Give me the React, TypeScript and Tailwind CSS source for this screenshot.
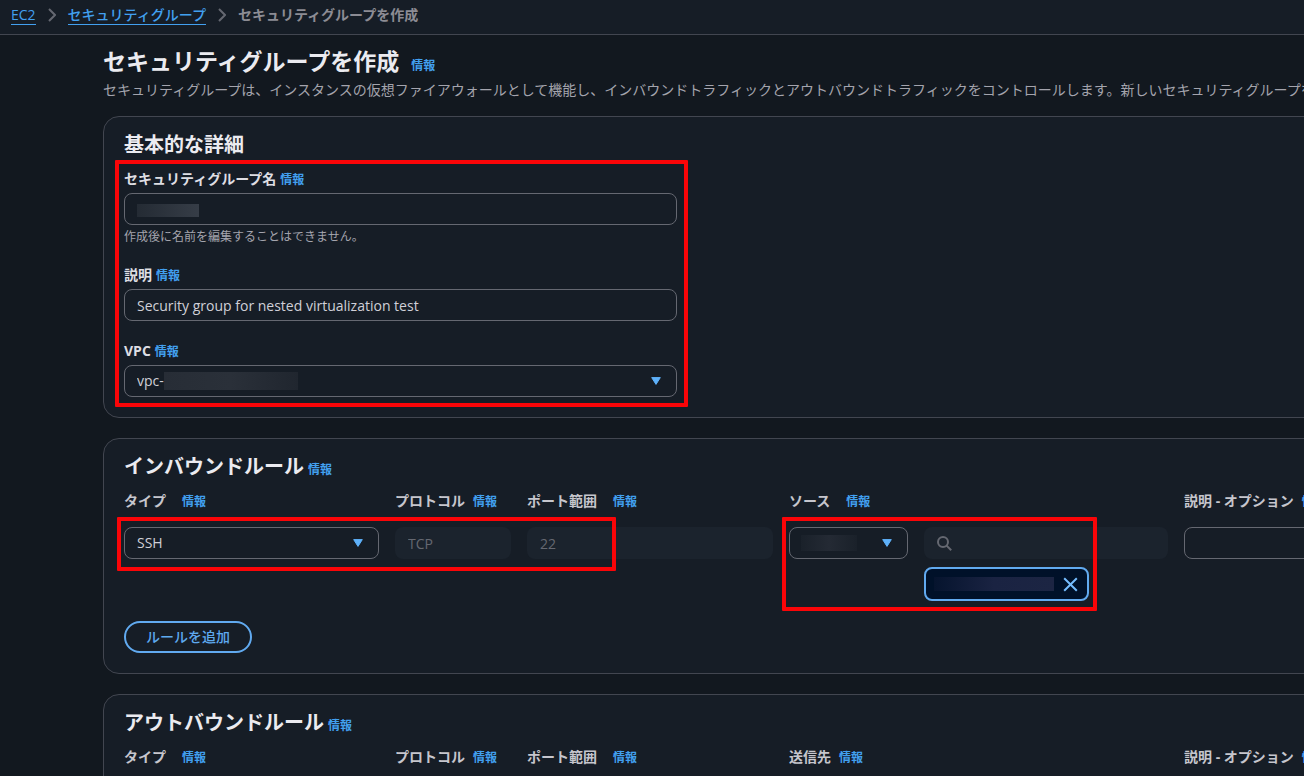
import type { ReactNode } from "react";

function InfoLink() {
  return (
    <a href="#info" className="text-xs leading-5 font-bold text-[#42a0f0]">
      情報
    </a>
  );
}

function Chevron() {
  return (
    <svg width="8" height="14" viewBox="0 0 8 14" fill="none" stroke="#656871" strokeWidth="2" aria-hidden="true">
      <path d="M1 1l6 6-6 6" />
    </svg>
  );
}

function Arrow() {
  return (
    <svg
      className="pointer-events-none absolute right-4 top-3 h-2 w-[10px]"
      viewBox="0 0 10 8"
      fill="#5eb1fa"
      stroke="#5eb1fa"
      strokeLinejoin="round"
      aria-hidden="true"
    >
      <path d="M0.7 0.6h8.6L5 7.4z" />
    </svg>
  );
}

function Redaction({ className }: { className: string }) {
  return <span aria-hidden="true" className={`pointer-events-none absolute ${className}`} />;
}

function Highlight({ className }: { className: string }) {
  return (
    <span
      aria-hidden="true"
      className={`pointer-events-none absolute z-10 rounded-[1px] border-4 border-[#fa0508] ${className}`}
    />
  );
}

const control =
  "block h-8 w-full appearance-none rounded-lg border border-[#656871] bg-[#161d26] px-3 text-sm font-medium text-[#d0d0d8] outline-none";
const disabledControl =
  "block h-8 w-full rounded-lg bg-[#1b232d] px-[13px] text-sm text-[#656871] outline-none";

function Select({ id, label, value, children }: { id: string; label?: string; value: string; children?: ReactNode }) {
  return (
    <div className="relative">
      <select id={id} aria-label={label} className={control} defaultValue={value}>
        <option value={value}>{value}</option>
      </select>
      {children}
      <Arrow />
    </div>
  );
}

function FieldLabel({ htmlFor, children }: { htmlFor: string; children: ReactNode }) {
  return (
    <div className="flex h-5 items-baseline gap-1 text-sm leading-5">
      <label htmlFor={htmlFor} className="font-bold text-[#dedee3]">
        {children}
      </label>
      <InfoLink />
    </div>
  );
}

function Card({ title, info, children }: { title: string; info?: boolean; children: ReactNode }) {
  return (
    <section className="rounded-2xl border border-[#424650] bg-[#161d26] px-5 pt-4 pb-5">
      <div className="flex h-6 items-baseline gap-1">
        <h2 className="text-xl leading-6 font-bold text-[#ebebf0]">{title}</h2>
        {info && <InfoLink />}
      </div>
      {children}
    </section>
  );
}

const columns = "grid grid-cols-[255px_116px_246px_379px_1fr] gap-x-4";

function RuleHeader({ prefix, target }: { prefix: string; target: { text: string; wide: boolean } }) {
  const items = [
    { id: "type", text: "タイプ", wide: true },
    { id: "protocol", text: "プロトコル", wide: false },
    { id: "port", text: "ポート範囲", wide: true },
    { id: "target", ...target },
    { id: "description", text: "説明 - オプション", wide: false },
  ];
  return (
    <div className={`${columns} mt-3`}>
      {items.map((item) => (
        <div
          key={item.id}
          className={`flex h-5 items-baseline text-sm leading-5 whitespace-nowrap ${item.wide ? "gap-4" : "gap-2"}`}
        >
          <label htmlFor={`${prefix}-${item.id}`} className="font-bold text-[#c6c6cd]">
            {item.text}
          </label>
          <InfoLink />
        </div>
      ))}
    </div>
  );
}

export default function App() {
  return (
    <div className="min-h-screen overflow-x-hidden bg-[#12181f] font-['Open_Sans','Noto_Sans_CJK_JP',sans-serif]">
      <nav
        aria-label="パンくずリスト"
        className="flex items-center gap-3 border-b border-[#424650] bg-[#161d26] pt-[5px] pb-[9px] pl-[11px] text-sm leading-[19px]"
      >
        <a href="#ec2" className="border-b border-[#42a0f0] font-medium text-[#42a0f0]">
          EC2
        </a>
        <Chevron />
        <a href="#groups" className="border-b border-[#42a0f0] font-medium text-[#42a0f0]">
          セキュリティグループ
        </a>
        <Chevron />
        <span className="border-b border-transparent font-bold text-[#8c8c94]">セキュリティグループを作成</span>
      </nav>

      <main className="ml-[103px] min-w-[1440px] pt-3">
        <div className="flex h-7 items-baseline gap-3">
          <h1 className="text-[23px] leading-7 font-bold text-[#ebebf0]">セキュリティグループを作成</h1>
          <InfoLink />
        </div>
        <p className="mt-1 text-sm leading-[21px] whitespace-nowrap text-[#a4a4ad]">
          セキュリティグループは、インスタンスの仮想ファイアウォールとして機能し、インバウンドトラフィックとアウトバウンドトラフィックをコントロールします。新しいセキュリティグループを作成するには、以下のフィールドに入力します。
        </p>

        <div className="mt-4 flex flex-col gap-5">
          <Card title="基本的な詳細">
            <div className="relative mt-3 flex w-[553px] flex-col gap-5">
              <Highlight className="-top-[9px] -right-[11px] -bottom-[10px] -left-[9px]" />
              <div>
                <FieldLabel htmlFor="group-name">セキュリティグループ名</FieldLabel>
                <div className="relative mt-1">
                  <input id="group-name" type="text" className={control} />
                  <Redaction className="top-[11px] left-[13px] h-[13px] w-[62px] bg-linear-to-r from-[#242b34] to-[#363d47]" />
                </div>
                <p className="mt-1 text-xs leading-4 text-[#a4a4ad]">作成後に名前を編集することはできません。</p>
              </div>
              <div>
                <FieldLabel htmlFor="description">説明</FieldLabel>
                <div className="mt-1">
                  <input
                    id="description"
                    type="text"
                    className={control}
                    defaultValue="Security group for nested virtualization test"
                  />
                </div>
              </div>
              <div>
                <FieldLabel htmlFor="vpc">VPC</FieldLabel>
                <div className="mt-1">
                  <Select id="vpc" value="vpc-">
                    <Redaction className="top-[7px] left-10 h-[18px] w-[134px] bg-linear-to-r from-[#272d36] via-[#2a3039] to-[#20262f]" />
                  </Select>
                </div>
              </div>
            </div>
          </Card>

          <Card title="インバウンドルール" info>
            <RuleHeader prefix="inbound" target={{ text: "ソース", wide: true }} />
            <div className={`${columns} relative mt-4`}>
              <Highlight className="-top-[10px] -left-[7px] h-[54px] w-[499px]" />
              <Highlight className="-top-[10px] left-[658px] h-[94px] w-[315px]" />
              <Select id="inbound-type" value="SSH" />
              <input id="inbound-protocol" type="text" disabled className={disabledControl} defaultValue="TCP" />
              <input id="inbound-port" type="text" disabled className={disabledControl} defaultValue="22" />
              <div className="grid grid-cols-[119px_1fr] gap-4">
                <Select id="inbound-target" value="">
                  <Redaction className="top-2 left-3 h-4 w-14 bg-linear-to-r from-[#1a212a] via-[#242a34] to-[#1a212a]" />
                </Select>
                <div>
                  <div className="relative">
                    <input type="search" aria-label="ソースを検索" disabled className={disabledControl} />
                    <svg
                      className="pointer-events-none absolute top-[9px] left-[13px]"
                      width="15"
                      height="15"
                      viewBox="0 0 15 15"
                      fill="none"
                      stroke="#656871"
                      strokeWidth="2"
                      aria-hidden="true"
                    >
                      <circle cx="6" cy="6" r="5" />
                      <path d="M9.6 9.6l4.6 4.6" />
                    </svg>
                  </div>
                  <div className="relative mt-2 flex h-[34px] w-[165px] items-center justify-end rounded-lg border-2 border-[#61aaf0] bg-[#001129] pr-[9px]">
                    <Redaction className="top-2 left-2 h-[14px] w-[120px] bg-linear-to-r from-[#06142e] via-[#1a2342] to-[#1c2543]" />
                    <button type="button" aria-label="削除" className="flex">
                      <svg width="15" height="15" viewBox="0 0 15 15" fill="none" stroke="#75bdff" strokeWidth="2">
                        <path d="M1.2 1.2l12.6 12.6M13.8 1.2L1.2 13.8" />
                      </svg>
                    </button>
                  </div>
                </div>
              </div>
              <input id="inbound-description" type="text" className={control} />
            </div>
            <button
              type="button"
              className="mt-5 block h-8 rounded-full border-2 border-[#61aaf0] px-5 text-sm font-medium text-[#5eaaf0]"
            >
              ルールを追加
            </button>
          </Card>

          <Card title="アウトバウンドルール" info>
            <RuleHeader prefix="outbound" target={{ text: "送信先", wide: false }} />
            <div className={`${columns} mt-4`}>
              <Select id="outbound-type" value="すべてのトラフィック" />
              <input id="outbound-protocol" type="text" disabled className={disabledControl} defaultValue="すべて" />
              <input id="outbound-port" type="text" disabled className={disabledControl} defaultValue="すべて" />
              <Select id="outbound-target" value="カスタム" />
              <input id="outbound-description" type="text" className={control} />
            </div>
          </Card>
        </div>
      </main>
    </div>
  );
}
